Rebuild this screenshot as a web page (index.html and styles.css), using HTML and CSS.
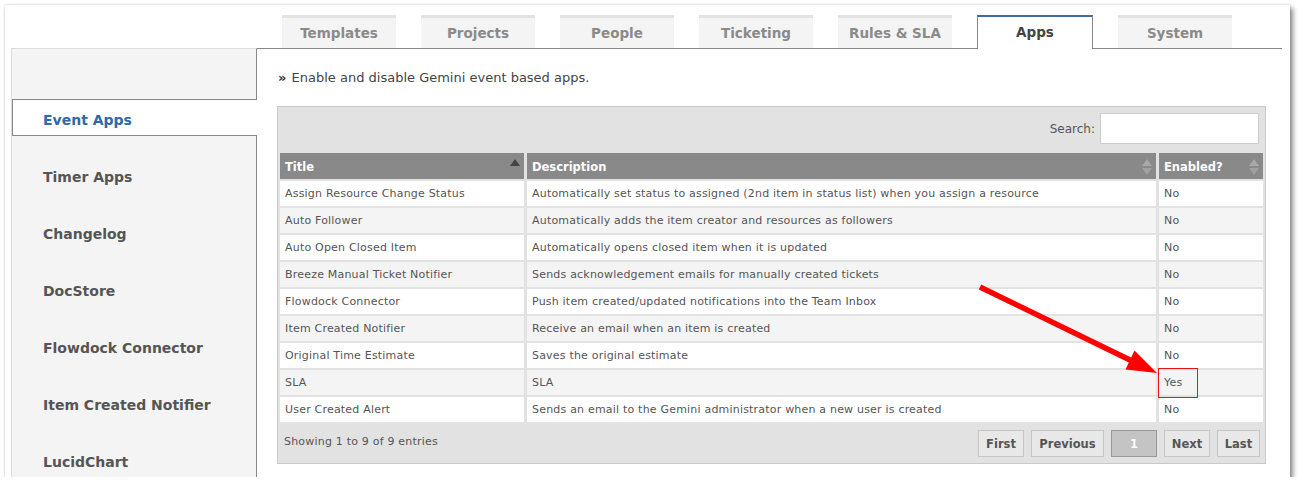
FILE: index.html
```html
<!DOCTYPE html>
<html>
<head>
<meta charset="utf-8">
<title>Apps</title>
<link rel="stylesheet" href="styles.css">
</head>
<body>
<div class="frame">
  <div class="tabbar">
    <div class="tab">Templates</div>
    <div class="tab">Projects</div>
    <div class="tab">People</div>
    <div class="tab">Ticketing</div>
    <div class="tab">Rules &amp; SLA</div>
    <div class="tab active">Apps</div>
    <div class="tab">System</div>
  </div>
  <div class="body">
    <nav class="sidebar">
      <div class="side-item active">Event Apps</div>
      <div class="side-item">Timer Apps</div>
      <div class="side-item">Changelog</div>
      <div class="side-item">DocStore</div>
      <div class="side-item">Flowdock Connector</div>
      <div class="side-item">Item Created Notifier</div>
      <div class="side-item">LucidChart</div>
    </nav>
    <main class="main">
      <p class="intro"><span class="raquo">»</span> Enable and disable Gemini event based apps.</p>
      <div class="dt">
        <div class="dt-top">
          <label class="search-label">Search:</label>
          <input class="search" type="text">
        </div>
        <div class="grid">
          <div class="th">Title<svg class="sort" width="10" height="18" viewBox="0 0 10 18"><path d="M5 1 L10 8 L0 8 Z" fill="#444"/></svg></div>
          <div class="th">Description<svg class="sort" width="10" height="18" viewBox="0 0 10 18"><path d="M5 1 L10 8 L0 8 Z" fill="#a9a9a9"/><path d="M0 10 L10 10 L5 17 Z" fill="#a0a0a0"/></svg></div>
          <div class="th">Enabled?<svg class="sort" width="10" height="18" viewBox="0 0 10 18"><path d="M5 1 L10 8 L0 8 Z" fill="#a9a9a9"/><path d="M0 10 L10 10 L5 17 Z" fill="#a0a0a0"/></svg></div>

          <div class="td odd">Assign Resource Change Status</div>
          <div class="td odd">Automatically set status to assigned (2nd item in status list) when you assign a resource</div>
          <div class="td odd">No</div>

          <div class="td even">Auto Follower</div>
          <div class="td even">Automatically adds the item creator and resources as followers</div>
          <div class="td even">No</div>

          <div class="td odd">Auto Open Closed Item</div>
          <div class="td odd">Automatically opens closed item when it is updated</div>
          <div class="td odd">No</div>

          <div class="td even">Breeze Manual Ticket Notifier</div>
          <div class="td even">Sends acknowledgement emails for manually created tickets</div>
          <div class="td even">No</div>

          <div class="td odd">Flowdock Connector</div>
          <div class="td odd">Push item created/updated notifications into the Team Inbox</div>
          <div class="td odd">No</div>

          <div class="td even">Item Created Notifier</div>
          <div class="td even">Receive an email when an item is created</div>
          <div class="td even">No</div>

          <div class="td odd">Original Time Estimate</div>
          <div class="td odd">Saves the original estimate</div>
          <div class="td odd">No</div>

          <div class="td even">SLA</div>
          <div class="td even">SLA</div>
          <div class="td even">Yes</div>

          <div class="td odd">User Created Alert</div>
          <div class="td odd">Sends an email to the Gemini administrator when a new user is created</div>
          <div class="td odd">No</div>
        </div>
        <div class="dt-foot">
          <span class="info">Showing 1 to 9 of 9 entries</span>
          <div class="pager">
            <span class="btn w-first">First</span>
            <span class="btn w-prev">Previous</span>
            <span class="btn current w-one">1</span>
            <span class="btn w-next">Next</span>
            <span class="btn w-last">Last</span>
          </div>
        </div>
      </div>
    </main>
  </div>
  <svg class="arrow" width="1298" height="487" viewBox="0 0 1298 487">
    <line x1="980" y1="287" x2="1131" y2="360.5" stroke="#f00" stroke-width="5.5"/>
    <polygon points="1125.5,369.5 1134.5,350.5 1157,373" fill="#f00"/>
  </svg>
  <div class="highlight"></div>
</div>
</body>
</html>
```

FILE: styles.css
```css
html, body {
  margin: 0;
  padding: 0;
  background: #ffffff;
}

body {
  font-family: "DejaVu Sans", "Noto Sans", sans-serif;
  color: #555;
}

.frame {
  position: relative;
  margin: 5px 0 0 5px;
  width: 1285px;
  height: 472px;
  box-sizing: border-box;
  padding: 0 8px 0 6px;
  background: #fff;
  box-shadow: 0 0 2px rgba(0,0,0,0.18), 3px 3px 5px rgba(0,0,0,0.45);
  overflow: hidden;
  display: flex;
  flex-direction: column;
}

/* Tabs */
.tabbar {
  display: flex;
  align-items: flex-end;
  gap: 25px;
  padding: 10px 0 0 271px;
  height: 43px;
  box-sizing: border-box;
}

.tab {
  width: 114px;
  height: 33px;
  box-sizing: border-box;
  border-top: 3px solid #e3e3e3;
  background: #f4f4f4;
  color: #8a8a8a;
  font-weight: bold;
  font-size: 13.5px;
  text-align: center;
  line-height: 30px;
  white-space: nowrap;
}

.tab.active {
  width: 116px;
  height: 34px;
  margin-bottom: -1px;
  position: relative;
  z-index: 1;
  background: #fff;
  border-top: 2px solid #3d6b9e;
  border-left: 1px solid #888;
  border-right: 1px solid #888;
  color: #444;
  line-height: 31px;
}

/* Body */
.body {
  display: flex;
  flex: 1;
  min-height: 0;
}

.sidebar {
  width: 246px;
  flex: none;
  box-sizing: border-box;
  background: #f4f4f4;
  border-top: 1px solid #dcdcdc;
  border-left: 1px solid #dcdcdc;
  border-right: 1px solid #888;
  padding-top: 50px;
}

.side-item {
  border-top: 1px solid transparent;
  border-bottom: 1px solid transparent;
  border-left: 1px solid transparent;
  padding: 5px 0 0 30px;
  line-height: 30px;
  height: 30px;
  margin-bottom: 20px;
  font-size: 14px;
  font-weight: bold;
  color: #555;
  white-space: nowrap;
}

.side-item.active {
  background: #fff;
  border-color: #888;
  margin-right: -1px;
  color: #2f69a6;
}

.main {
  flex: 1;
  border-top: 1px solid #888;
  min-width: 0;
}

.intro {
  margin: 19px 0 0 21px;
  line-height: 20px;
  font-size: 13px;
  color: #444;
}

.raquo {
  font-weight: bold;
  color: #333;
  margin-right: 1px;
}

/* Data table */
.dt {
  margin: 18px 16px 0 20px;
  border: 1px solid #c9c9c9;
  background: #e2e2e2;
  padding: 0 2px 6px 2px;
}

.dt-top {
  display: flex;
  justify-content: flex-end;
  align-items: center;
  gap: 5px;
  padding: 6px 4px 0 0;
  margin-bottom: 9px;
}

.search-label {
  font-size: 12px;
  color: #555;
}

.search {
  width: 159px;
  height: 31px;
  box-sizing: border-box;
  border: 1px solid #cccccc;
  background: #fff;
  margin: 0;
  padding: 0;
}

.grid {
  display: grid;
  grid-template-columns: 244px 629px 104px;
  column-gap: 3px;
  row-gap: 2px;
}

.th {
  height: 26px;
  box-sizing: border-box;
  padding: 1px 4px 0 5px;
  background: #898989;
  color: #fff;
  font-weight: bold;
  font-size: 11.5px;
  display: flex;
  align-items: center;
  justify-content: space-between;
}

.sort {
  display: block;
}

.td {
  height: 24px;
  padding-top: 1px;
  line-height: 24px;
  padding-left: 5px;
  font-size: 11px;
  letter-spacing: 0.2px;
  color: #555;
  white-space: nowrap;
  overflow: hidden;
}

.td.odd { background: #ffffff; }
.td.even { background: #f4f4f4; }

.dt-foot {
  display: flex;
  justify-content: space-between;
  align-items: center;
  margin-top: 8px;
}

.info {
  padding-left: 4px;
  font-size: 11px;
  letter-spacing: 0.2px;
  color: #555;
  margin-top: -5px;
}

.pager {
  display: flex;
  gap: 7px;
  padding-right: 3px;
}

.btn {
  height: 27px;
  box-sizing: border-box;
  border: 1px solid #c6c6c6;
  background: #e8e8e8;
  color: #555;
  font-size: 11.5px;
  font-weight: bold;
  display: flex;
  align-items: center;
  justify-content: center;
}

.btn.current {
  background: #c4c4c4;
  border-color: #999;
  color: #fff;
}

.w-first { width: 46px; }
.w-prev { width: 73px; }
.w-one { width: 46px; }
.w-next { width: 46px; }
.w-last { width: 43px; }

/* Annotations drawn over the screenshot */
.arrow {
  position: absolute;
  left: -5px;
  top: -5px;
  pointer-events: none;
}

.highlight {
  position: absolute;
  left: 1153px;
  top: 363px;
  width: 40px;
  height: 30px;
  box-sizing: border-box;
  border: 1px solid #e8141a;
  pointer-events: none;
}
```
